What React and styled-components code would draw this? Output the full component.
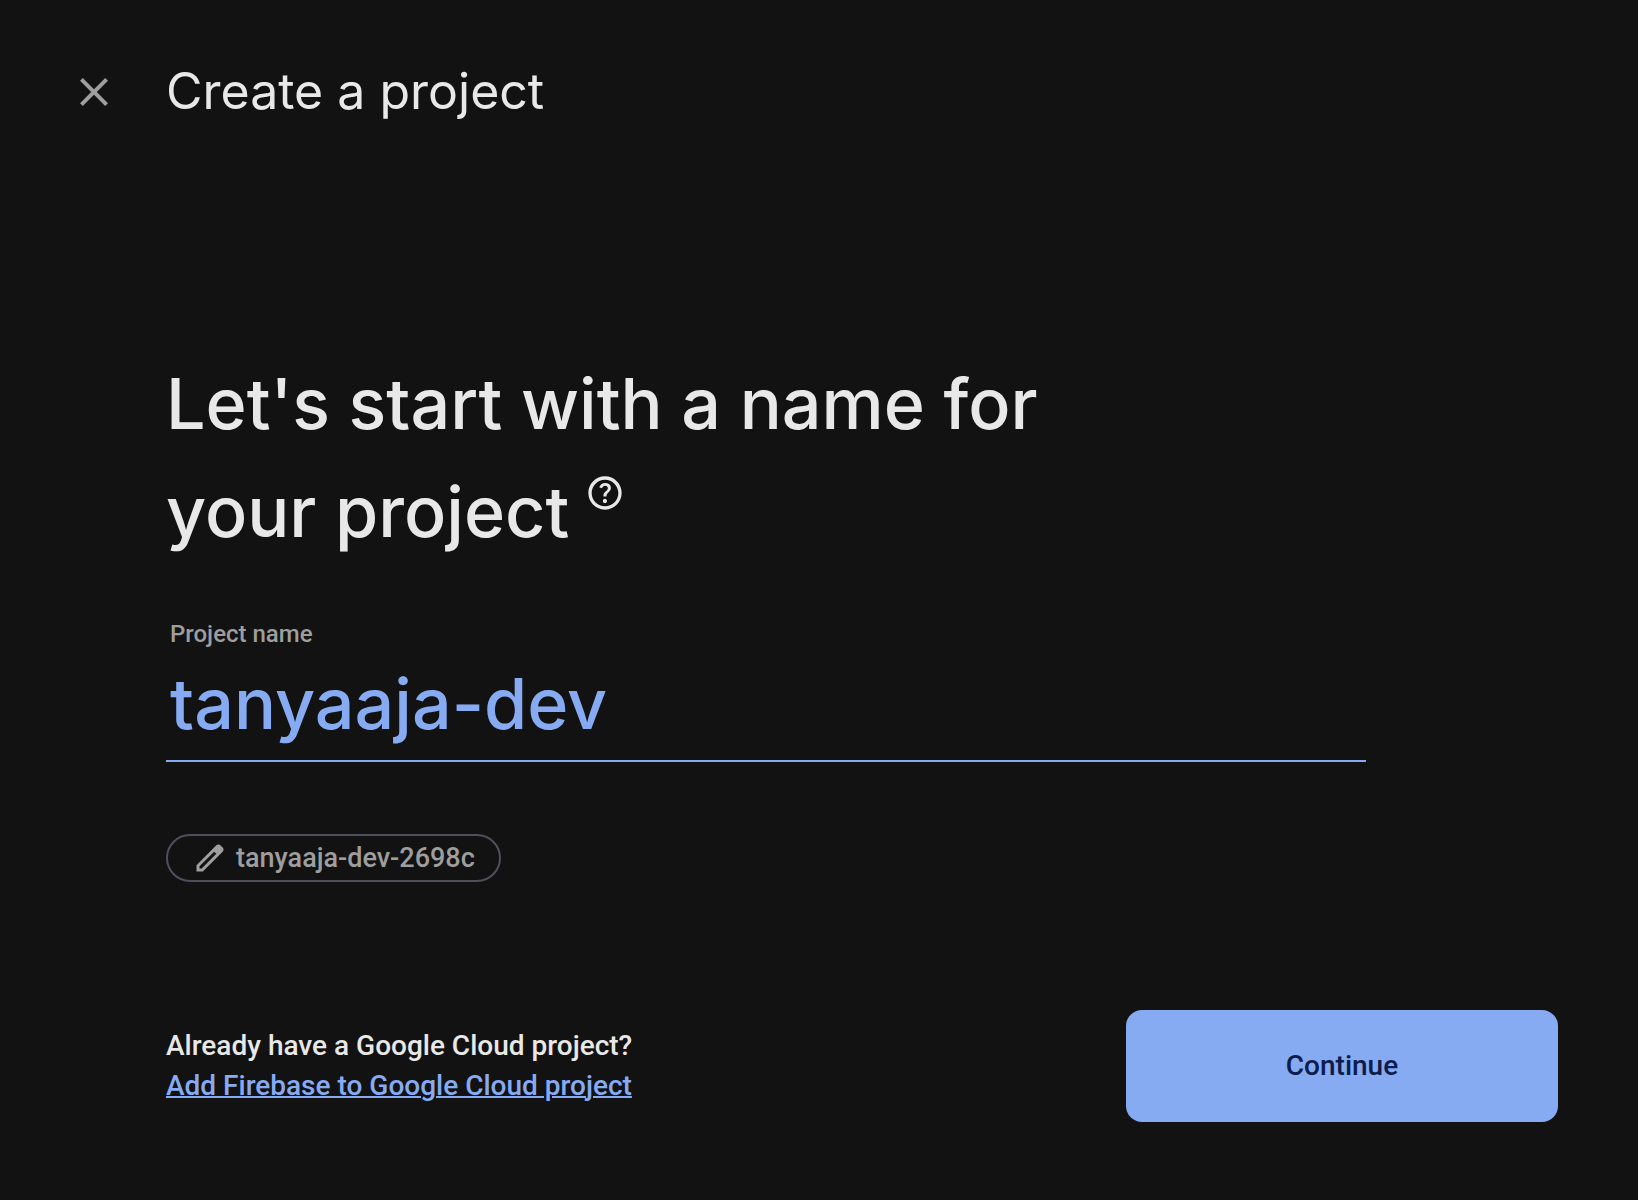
import React, { useState } from "react";
import styled, { createGlobalStyle } from "styled-components";

const colors = {
  page: "#121212",
  text: "#e8e8e8",
  muted: "#9e9e9e",
  accent: "#87abf2",
  outline: "#4e515b",
  onAccent: "#0b1c4d",
};

const displayFont = `"Google Sans", Inter, Roboto, sans-serif`;

const GlobalStyle = createGlobalStyle`
  *, *::before, *::after { box-sizing: border-box; }
  html { background: ${colors.page}; }
  body {
    margin: 0;
    color: ${colors.text};
    font-family: Roboto, "Liberation Sans", sans-serif;
    font-weight: 500;
  }
`;

const Page = styled.div`
  min-height: 100vh;
  display: flex;
  flex-direction: column;
`;

const Header = styled.header`
  display: flex;
  align-items: center;
  gap: 48px;
  padding: 56px 70px 0;
`;

const CloseButton = styled.button`
  display: flex;
  padding: 0;
  border: 0;
  background: none;
  color: ${colors.muted};
  cursor: pointer;
`;

const Title = styled.h1`
  margin: 0;
  padding-bottom: 2px;
  font: 400 50px/70px ${displayFont};
`;

const Main = styled.main`
  flex: 1;
  padding: 222px 80px 0 166px;
`;

const Heading = styled.h2`
  max-width: 920px;
  margin: 0;
  font: 500 70px/108px ${displayFont};
`;

const HelpButton = styled.button`
  display: inline-flex;
  margin-left: 16px;
  padding: 0;
  border: 0;
  background: none;
  color: inherit;
  vertical-align: 24px;
  cursor: pointer;
`;

const Field = styled.div`
  display: flex;
  flex-direction: column;
  max-width: 1200px;
  margin-top: 54px;
`;

const FieldLabel = styled.label`
  padding-left: 4px;
  color: ${colors.muted};
  font-size: 24px;
  line-height: 28px;
`;

const NameInput = styled.input`
  width: 100%;
  height: 114px;
  padding: 0 4px 2px;
  border: 0;
  border-bottom: 2px solid ${colors.accent};
  border-radius: 0;
  outline: 0;
  background: none;
  color: ${colors.accent};
  font: 500 70px/108px ${displayFont};
`;

const Chip = styled.button`
  display: inline-flex;
  align-items: center;
  gap: 8px;
  height: 48px;
  margin-top: 72px;
  padding: 0 24px;
  border: 2px solid ${colors.outline};
  border-radius: 24px;
  background: none;
  color: ${colors.muted};
  font: inherit;
  font-size: 27px;
  cursor: pointer;
`;

const Footer = styled.footer`
  display: flex;
  align-items: center;
  justify-content: space-between;
  padding: 0 80px 78px 166px;
`;

const Prompt = styled.p`
  display: flex;
  flex-direction: column;
  margin: 0;
  font-size: 28px;
  line-height: 40px;
`;

const PromptLink = styled.a`
  color: ${colors.accent};
  text-decoration-thickness: 2px;
`;

const ContinueButton = styled.button`
  width: 432px;
  height: 112px;
  padding: 0 0 2px;
  border: 0;
  border-radius: 16px;
  background: ${colors.accent};
  color: ${colors.onAccent};
  font: inherit;
  font-size: 28px;
  cursor: pointer;
`;

function Icon({ size, path }) {
  return (
    <svg width={size} height={size} viewBox="0 0 24 24" fill="currentColor" aria-hidden="true">
      <path d={path} />
    </svg>
  );
}

const closePath =
  "M19 6.41 17.59 5 12 10.59 6.41 5 5 6.41 10.59 12 5 17.59 6.41 19 12 13.41 17.59 19 19 17.59 13.41 12z";
const helpPath =
  "M11.95 18q.525 0 .888-.363.362-.362.362-.887t-.362-.887q-.363-.363-.888-.363t-.887.363q-.363.362-.363.887t.363.887q.362.363.887.363Zm-.9-3.85h1.85q0-.825.188-1.3.187-.475 1.062-1.3.65-.65 1.025-1.238.375-.587.375-1.412 0-1.4-1.025-2.15T12.1 6q-1.425 0-2.312.75-.888.75-1.238 1.8l1.65.65q.125-.45.563-.975.437-.525 1.337-.525.8 0 1.2.438.4.437.4.962 0 .5-.3.938-.3.437-.75.812-1.1.975-1.35 1.475-.25.5-.25 1.825ZM12 2C6.48 2 2 6.48 2 12s4.48 10 10 10 10-4.48 10-10S17.52 2 12 2zm0 18c-4.41 0-8-3.59-8-8s3.59-8 8-8 8 3.59 8 8-3.59 8-8 8z";
const editPath =
  "M5 19h1.425L16.2 9.225 14.775 7.8 5 17.575ZM3 21v-4.25L16.2 3.575q.3-.275.662-.425.363-.15.763-.15t.775.15q.375.15.65.45L20.425 5q.3.275.437.65.138.375.138.75 0 .4-.137.762-.138.363-.438.663L7.25 21Z";

export default function App() {
  const [name, setName] = useState("tanyaaja-dev");
  return (
    <Page>
      <GlobalStyle />
      <Header>
        <CloseButton type="button" aria-label="Close">
          <Icon size={48} path={closePath} />
        </CloseButton>
        <Title>Create a project</Title>
      </Header>
      <Main>
        <Heading>
          Let's start with a name for your project
          <HelpButton type="button" aria-label="Help">
            <Icon size={40} path={helpPath} />
          </HelpButton>
        </Heading>
        <Field>
          <FieldLabel htmlFor="project-name">Project name</FieldLabel>
          <NameInput
            id="project-name"
            autoComplete="off"
            spellCheck={false}
            value={name}
            onChange={(event) => setName(event.target.value)}
          />
        </Field>
        <Chip type="button">
          <Icon size={36} path={editPath} />
          tanyaaja-dev-2698c
        </Chip>
      </Main>
      <Footer>
        <Prompt>
          Already have a Google Cloud project?
          <PromptLink href="#google-cloud">Add Firebase to Google Cloud project</PromptLink>
        </Prompt>
        <ContinueButton type="button">Continue</ContinueButton>
      </Footer>
    </Page>
  );
}
